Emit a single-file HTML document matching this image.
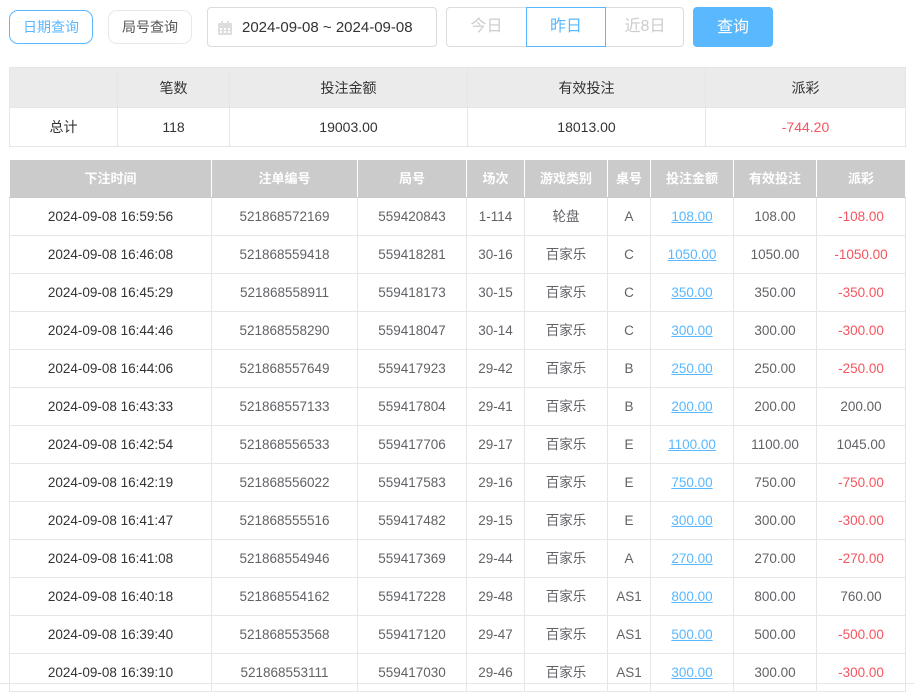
<!DOCTYPE html>
<html><head><meta charset="utf-8"><style>
*{box-sizing:border-box;margin:0;padding:0}
body{width:914px;height:684px;overflow:hidden;background:#fff;font-family:"Liberation Sans","Noto Sans CJK SC",sans-serif;position:relative;color:#333}
.abs{position:absolute}
.btn{position:absolute;top:10px;height:34px;width:84px;border-radius:9px;font-size:14px;line-height:32px;text-align:center}
table{position:absolute;border-collapse:collapse;table-layout:fixed}
td,th{text-align:center;border:1px solid #e6e6e6;font-size:14px;line-height:16px;vertical-align:middle}
.sum th{background:#ebebeb;font-weight:normal;height:40px;color:#333}
.sum td{height:39px;color:#333}
.det th{background:#cbcbcb;color:#fff;font-weight:bold;height:38px;border-color:#fff #fff #cbcbcb #fff;font-size:13px}
.det td{height:38px;color:#606266;font-size:13.5px}
.det td:first-child{color:#333}
.c{display:inline-block;line-height:16px;vertical-align:top;margin-top:0}
.lk{color:#5ab8ff;text-decoration:underline}
.r{color:#f5555f!important}
</style></head><body>
<div class="btn" style="left:9px;border:1px solid #5ab8ff;color:#5ab8ff">日期查询</div>
<div class="btn" style="left:108px;border:1px solid #e8e8e8;color:#555">局号查询</div>
<div class="abs" style="left:207px;top:7px;width:230px;height:40px;border:1px solid #dcdcdc;border-radius:4px">
<svg class="abs" style="left:9px;top:12px" width="16" height="16" viewBox="0 0 16 16"><rect x="1" y="3" width="14" height="12" rx="1" fill="#ddd"/><rect x="4" y="1" width="2" height="4" fill="#ddd"/><rect x="10" y="1" width="2" height="4" fill="#ddd"/><g fill="#fff"><rect x="3" y="8" width="2" height="2"/><rect x="7" y="8" width="2" height="2"/><rect x="11" y="8" width="2" height="2"/><rect x="3" y="11" width="2" height="2"/><rect x="7" y="11" width="2" height="2"/><rect x="11" y="11" width="2" height="2"/></g></svg>
<div class="abs" style="left:34px;top:11px;font-size:15px;line-height:18px;color:#333;white-space:nowrap">2024-09-08 ~ 2024-09-08</div></div>
<div class="abs" style="left:446px;top:7px;width:238px;height:40px;border:1px solid #dcdcdc;border-radius:4px;font-size:16px;color:#ccc;line-height:38px">
<div class="abs" style="left:0;width:79px;text-align:center">今日</div>
<div class="abs" style="left:79px;top:-1px;width:80px;height:40px;border:1px solid #5ab8ff;color:#5ab8ff;text-align:center">昨日</div>
<div class="abs" style="left:159px;width:78px;text-align:center">近8日</div></div>
<div class="abs" style="left:693px;top:7px;width:80px;height:40px;background:#5ab8ff;border-radius:4px;color:#fff;font-size:16px;text-align:center;line-height:42px">查询</div>
<table class="sum" style="left:9px;top:67px;width:896px">
<colgroup><col style="width:108px"><col style="width:112px"><col style="width:238px"><col style="width:238px"><col style="width:200px"></colgroup>
<tr><th></th><th>笔数</th><th>投注金额</th><th>有效投注</th><th>派彩</th></tr>
<tr><td>总计</td><td>118</td><td>19003.00</td><td>18013.00</td><td class="r">-744.20</td></tr>
</table>
<table class="det" style="left:9px;top:159px;width:896px">
<colgroup><col style="width:202px"><col style="width:146px"><col style="width:109px"><col style="width:58px"><col style="width:83px"><col style="width:43px"><col style="width:83px"><col style="width:83px"><col style="width:89px"></colgroup>
<tr><th>下注时间</th><th>注单编号</th><th>局号</th><th>场次</th><th>游戏类别</th><th>桌号</th><th>投注金额</th><th>有效投注</th><th>派彩</th></tr>
<tr><td>2024-09-08 16:59:56</td><td>521868572169</td><td>559420843</td><td>1-114</td><td><span class="c">轮盘</span></td><td>A</td><td><span class="lk">108.00</span></td><td>108.00</td><td class="r">-108.00</td></tr>
<tr><td>2024-09-08 16:46:08</td><td>521868559418</td><td>559418281</td><td>30-16</td><td><span class="c">百家乐</span></td><td>C</td><td><span class="lk">1050.00</span></td><td>1050.00</td><td class="r">-1050.00</td></tr>
<tr><td>2024-09-08 16:45:29</td><td>521868558911</td><td>559418173</td><td>30-15</td><td><span class="c">百家乐</span></td><td>C</td><td><span class="lk">350.00</span></td><td>350.00</td><td class="r">-350.00</td></tr>
<tr><td>2024-09-08 16:44:46</td><td>521868558290</td><td>559418047</td><td>30-14</td><td><span class="c">百家乐</span></td><td>C</td><td><span class="lk">300.00</span></td><td>300.00</td><td class="r">-300.00</td></tr>
<tr><td>2024-09-08 16:44:06</td><td>521868557649</td><td>559417923</td><td>29-42</td><td><span class="c">百家乐</span></td><td>B</td><td><span class="lk">250.00</span></td><td>250.00</td><td class="r">-250.00</td></tr>
<tr><td>2024-09-08 16:43:33</td><td>521868557133</td><td>559417804</td><td>29-41</td><td><span class="c">百家乐</span></td><td>B</td><td><span class="lk">200.00</span></td><td>200.00</td><td>200.00</td></tr>
<tr><td>2024-09-08 16:42:54</td><td>521868556533</td><td>559417706</td><td>29-17</td><td><span class="c">百家乐</span></td><td>E</td><td><span class="lk">1100.00</span></td><td>1100.00</td><td>1045.00</td></tr>
<tr><td>2024-09-08 16:42:19</td><td>521868556022</td><td>559417583</td><td>29-16</td><td><span class="c">百家乐</span></td><td>E</td><td><span class="lk">750.00</span></td><td>750.00</td><td class="r">-750.00</td></tr>
<tr><td>2024-09-08 16:41:47</td><td>521868555516</td><td>559417482</td><td>29-15</td><td><span class="c">百家乐</span></td><td>E</td><td><span class="lk">300.00</span></td><td>300.00</td><td class="r">-300.00</td></tr>
<tr><td>2024-09-08 16:41:08</td><td>521868554946</td><td>559417369</td><td>29-44</td><td><span class="c">百家乐</span></td><td>A</td><td><span class="lk">270.00</span></td><td>270.00</td><td class="r">-270.00</td></tr>
<tr><td>2024-09-08 16:40:18</td><td>521868554162</td><td>559417228</td><td>29-48</td><td><span class="c">百家乐</span></td><td>AS1</td><td><span class="lk">800.00</span></td><td>800.00</td><td>760.00</td></tr>
<tr><td>2024-09-08 16:39:40</td><td>521868553568</td><td>559417120</td><td>29-47</td><td><span class="c">百家乐</span></td><td>AS1</td><td><span class="lk">500.00</span></td><td>500.00</td><td class="r">-500.00</td></tr>
<tr><td>2024-09-08 16:39:10</td><td>521868553111</td><td>559417030</td><td>29-46</td><td><span class="c">百家乐</span></td><td>AS1</td><td><span class="lk">300.00</span></td><td>300.00</td><td class="r">-300.00</td></tr>
</table>
<div class="abs" style="left:0;top:683px;width:914px;height:1px;background:#e6e6e6"></div>
</body></html>
